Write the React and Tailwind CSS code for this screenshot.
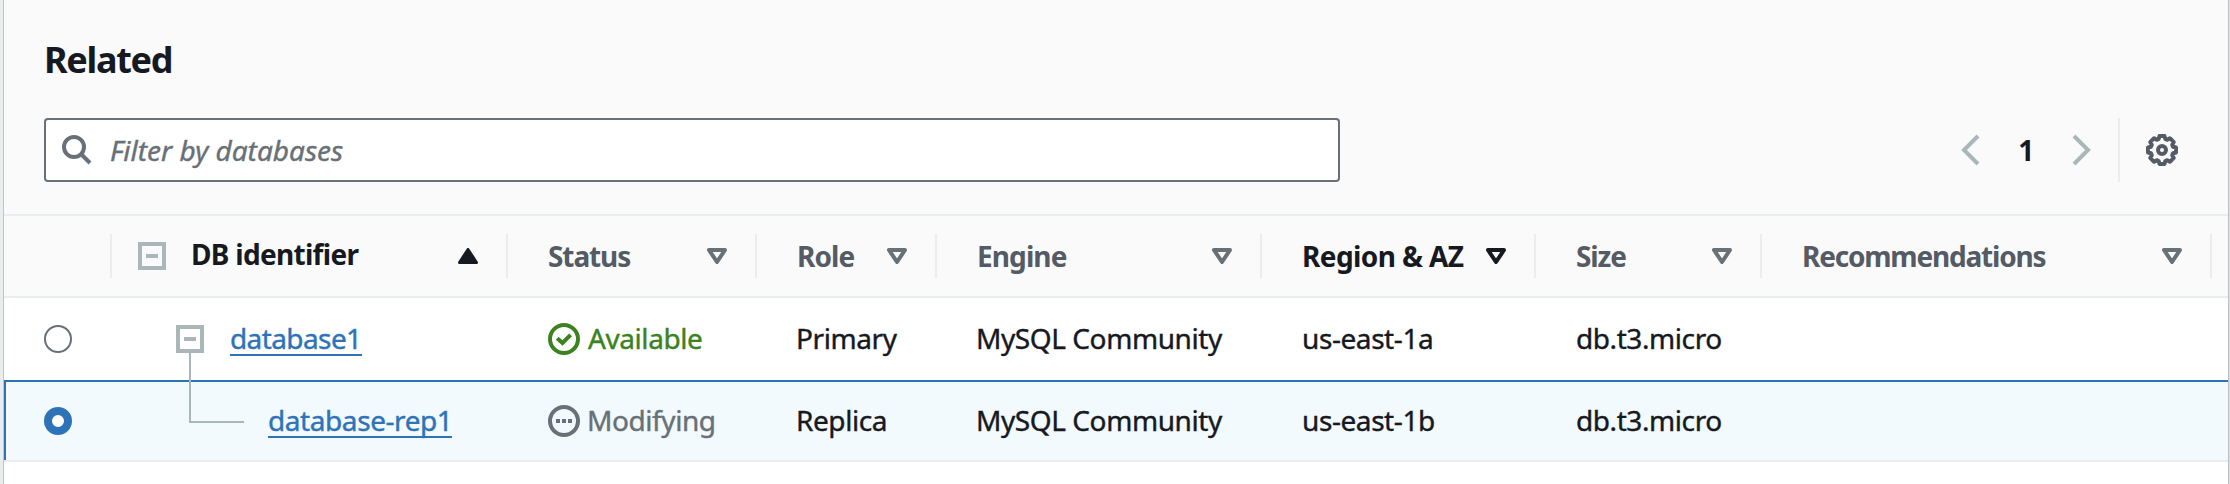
const COLUMNS =
  "grid grid-cols-[108px_396px_249px_180px_325px_274px_226px_450px_1fr]";

function SortIcon({ up = false }) {
  return (
    <svg width="20" height="16" viewBox="0 0 20 16" className="shrink-0">
      {up ? (
        <path d="M10 1.5 18.5 14.5H1.5Z" fill="currentColor" stroke="currentColor" strokeWidth="3" strokeLinejoin="round" />
      ) : (
        <path d="M2 2H18L10 14Z" fill="none" stroke="currentColor" strokeWidth="4" strokeLinejoin="round" />
      )}
    </svg>
  );
}

function CollapseBox() {
  return (
    <svg width="28" height="28" viewBox="0 0 28 28" className="shrink-0">
      <path d="M2 2H26V26H2Z" fill="none" stroke="#aab7b8" strokeWidth="4" />
      <path d="M8 14H20" stroke="#aab7b8" strokeWidth="4" />
    </svg>
  );
}

function Radio({ checked = false }) {
  return (
    <svg width="28" height="28" viewBox="0 0 28 28" className="shrink-0">
      {checked ? (
        <circle cx="14" cy="14" r="10" fill="#fff" stroke="#2e73b8" strokeWidth="8" />
      ) : (
        <circle cx="14" cy="14" r="13" fill="#fff" stroke="#687078" strokeWidth="2" />
      )}
    </svg>
  );
}

function StatusIcon({ kind }) {
  return (
    <svg width="32" height="32" viewBox="0 0 32 32" fill="none" stroke="currentColor" strokeWidth="4" className="shrink-0">
      <circle cx="16" cy="16" r="14" />
      {kind === "ok" ? (
        <path d="M9.2 15.2 14.5 20 22.6 11.8" />
      ) : (
        <path d="M8 16H24" strokeDasharray="4 2" />
      )}
    </svg>
  );
}

function HeaderCell({ label, tracking, dark = false }) {
  return (
    <div className={`my-[18px] flex h-11 items-center justify-between border-r-2 border-[#eaeded] pr-7 pl-10 ${dark ? "text-[#16191f]" : "text-[#545b64]"}`}>
      <span className={`font-bold ${tracking} whitespace-nowrap`}>{label}</span>
      <span className={dark ? "" : "text-[#687078]"}>
        <SortIcon />
      </span>
    </div>
  );
}

function Cell({ children }) {
  return <div className="flex items-center pl-10 whitespace-nowrap">{children}</div>;
}

function Text({ children, flush = false }) {
  return (
    <span className={`pb-0.5 [-webkit-text-stroke:0.4px_currentColor] ${flush ? "" : "-ml-px"}`}>{children}</span>
  );
}

function Link({ children }) {
  return (
    <a className="h-[33px] border-b-2 border-[#2e73b8] leading-[31px] text-[#2e73b8] [-webkit-text-stroke:0.4px_currentColor]">{children}</a>
  );
}

function Status({ kind, children }) {
  return (
    <span className={`flex items-center gap-2 ${kind === "ok" ? "text-[#3c8220]" : "text-[#687078]"}`}>
      <StatusIcon kind={kind} />
      <Text flush={kind === "ok"}>{children}</Text>
    </span>
  );
}

export default function App() {
  return (
    <div className="flex h-[484px] w-[2230px] overflow-hidden bg-white font-['Noto_Sans','Open_Sans',sans-serif] text-[28px] leading-9 tracking-[-0.42px] text-[#16191f]">
      <div className="w-1 shrink-0 border-r border-[#c0c4c5] bg-[#eaeded]" />
      <main className="flex w-[2224px] flex-col">
        <header className="flex h-[216px] flex-col border-b-2 border-[#eaeded] bg-[#fafafa] px-10">
          <h2 className="mt-9 text-[36px] leading-[48px] font-bold tracking-[-1.3px]">Related</h2>
          <div className="mt-[34px] flex h-16 items-center">
            <div className="flex h-16 w-[1296px] items-center rounded-[4px] border-2 border-[#687078] bg-white pl-4 text-[#687078]">
              <svg width="30" height="30" viewBox="0 0 30 30" fill="none" stroke="currentColor" strokeWidth="4">
                <circle cx="12" cy="12" r="10" />
                <path d="M19 19 28 28" />
              </svg>
              <span className="ml-[18px] tracking-[0px] italic [-webkit-text-stroke:0.4px_currentColor]">Filter by databases</span>
            </div>
            <div className="ml-auto flex h-16 items-center">
              <svg width="20" height="32" viewBox="0 0 20 32" fill="none" stroke="#aab7b8" strokeWidth="4">
                <path d="M18 2 4 16 18 30" />
              </svg>
              <span className="w-[92px] pb-px text-center font-bold">1</span>
              <svg width="20" height="32" viewBox="0 0 20 32" fill="none" stroke="#aab7b8" strokeWidth="4">
                <path d="M2 2 16 16 2 30" />
              </svg>
              <span className="ml-[26px] h-16 w-0.5 bg-[#eaeded]" />
              <svg width="32" height="32" viewBox="0 0 32 32" fill="none" stroke="#545b64" className="mr-[10px] ml-[26px]">
                <circle cx="16" cy="16" r="4" strokeWidth="4" />
                <path
                  strokeWidth="4"
                  strokeLinejoin="round"
                  d="M13.5 2H18.5L19.3 5 21.2 5.8 23.9 4.2 27.8 8.1 26.2 10.8 27 12.7 30 13.5V18.5L27 19.3 26.2 21.2 27.8 23.9 23.9 27.8 21.2 26.2 19.3 27 18.5 30H13.5L12.7 27 10.8 26.2 8.1 27.8 4.2 23.9 5.8 21.2 5 19.3 2 18.5V13.5L5 12.7 5.8 10.8 4.2 8.1 8.1 4.2 10.8 5.8 12.7 5Z"
                />
              </svg>
            </div>
          </div>
        </header>

        <div className={`${COLUMNS} h-[82px] border-b-2 border-[#eaeded] bg-[#fafafa]`}>
          <div className="my-[18px] h-11 border-r-2 border-[#eaeded]" />
          <div className="my-[18px] flex h-11 items-center border-r-2 border-[#eaeded] pr-7 pl-[26px]">
            <CollapseBox />
            <span className="ml-[25px] pb-1 font-bold tracking-[-0.7px]">DB identifier</span>
            <span className="ml-auto">
              <SortIcon up />
            </span>
          </div>
          <HeaderCell label="Status" tracking="tracking-[-1.1px]" />
          <HeaderCell label="Role" tracking="tracking-[-0.9px]" />
          <HeaderCell label="Engine" tracking="tracking-[-0.9px]" />
          <HeaderCell label="Region & AZ" tracking="tracking-[-0.6px]" dark />
          <HeaderCell label="Size" tracking="tracking-[-1.1px]" />
          <HeaderCell label="Recommendations" tracking="tracking-[-1.2px]" />
        </div>

        <div className={`${COLUMNS} h-[82px]`}>
          <Cell><Radio /></Cell>
          <div className="relative flex items-center pl-16">
            <CollapseBox />
            <span className="absolute top-[55px] left-[77px] z-10 h-[70px] w-[55px] border-b-2 border-l-2 border-[#aab7b8]" />
            <span className="ml-[26px] flex tracking-[-0.6px]"><Link>database1</Link></span>
          </div>
          <Cell><Status kind="ok">Available</Status></Cell>
          <Cell><Text>Primary</Text></Cell>
          <Cell><Text>MySQL Community</Text></Cell>
          <Cell><Text flush>us-east-1a</Text></Cell>
          <Cell><Text flush>db.t3.micro</Text></Cell>
        </div>

        <div className="h-[82px] border-t-2 border-b-2 border-t-[#2e73b8] border-b-[#eaeded] bg-[#f2fafd]">
          <div className={`${COLUMNS} h-[78px] shadow-[inset_2px_0_0_#2e73b8]`}>
            <Cell><Radio checked /></Cell>
            <div className="flex items-center pl-[156px]"><Link>database-rep1</Link></div>
            <Cell><Status kind="pending">Modifying</Status></Cell>
            <Cell><Text>Replica</Text></Cell>
            <Cell><Text>MySQL Community</Text></Cell>
            <Cell><Text flush>us-east-1b</Text></Cell>
            <Cell><Text flush>db.t3.micro</Text></Cell>
          </div>
        </div>
      </main>
      <div className="w-0.5 shrink-0 border-l border-[#b9c2c6] bg-[#dcdfe0]" />
    </div>
  );
}
